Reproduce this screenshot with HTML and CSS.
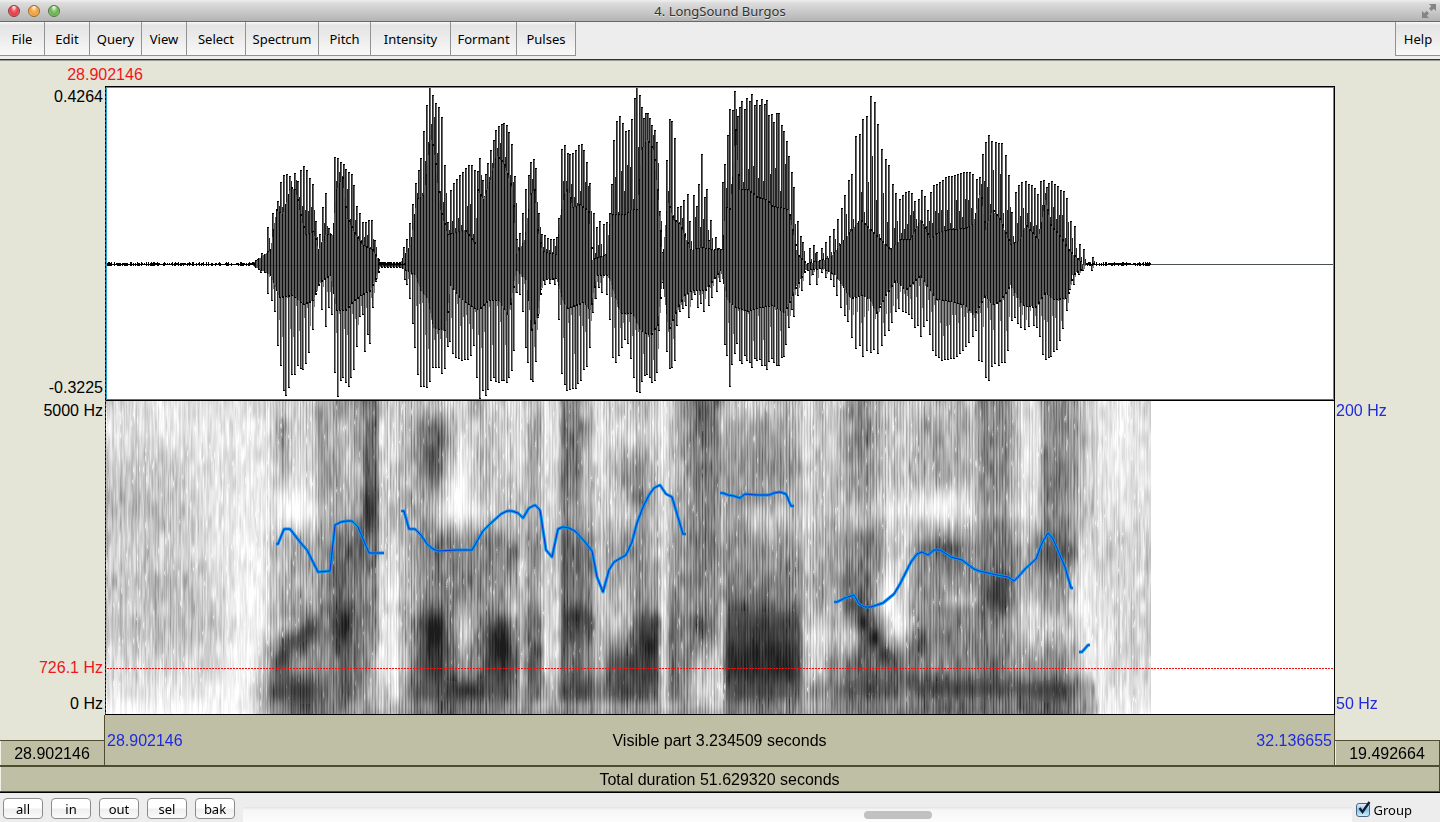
FILE: index.html
```html
<!DOCTYPE html>
<html lang="en">
<head>
    <meta charset="UTF-8">
    <meta name="viewport" content="width=device-width, initial-scale=1.0">
    <title>4. LongSound Burgos</title>
    <link rel="stylesheet" href="styles.css">
</head>
<body>

    <header class="titlebar">
        <div class="lights">
            <button class="light red" aria-label="Close"></button>
            <button class="light amber" aria-label="Minimize"></button>
            <button class="light green" aria-label="Zoom"></button>
        </div>
        <h1>4. LongSound Burgos</h1>
        <button class="fullscreen" aria-label="Full screen">
            <svg width="14" height="14" viewBox="0 0 14 14">
                <path d="M7 0H14V7L11.7 4.7L9.4 7L7 4.6L9.3 2.3Z M0 7L2.3 9.3L4.6 7L7 9.4L4.7 11.7L7 14H0Z" fill="#858585"/>
            </svg>
        </button>
    </header>

    <nav class="menubar">
        <button>File</button>
        <button>Edit</button>
        <button>Query</button>
        <button>View</button>
        <button>Select</button>
        <button>Spectrum</button>
        <button>Pitch</button>
        <button>Intensity</button>
        <button>Formant</button>
        <button>Pulses</button>
        <button class="help">Help</button>
    </nav>

    <main class="editor">
        <div class="cursor-time">28.902146</div>

        <div class="axis left">
            <div class="sound-axis">
                <span>0.4264</span>
                <span>-0.3225</span>
            </div>
            <div class="spectrum-axis">
                <span>5000 Hz</span>
                <div class="low">
                    <span class="red-text">726.1 Hz</span>
                    <span>0 Hz</span>
                </div>
            </div>
        </div>

        <canvas class="plot" id="plot" width="1230" height="629" role="img" aria-label="Waveform, spectrogram and pitch"></canvas>

        <div class="axis right">
            <div class="sound-axis"></div>
            <div class="spectrum-axis">
                <span>200 Hz</span>
                <span>50 Hz</span>
            </div>
        </div>

        <button class="bar before">28.902146</button>
        <button class="bar visible">
            <span class="blue-text">28.902146</span>
            <span>Visible part 3.234509 seconds</span>
            <span class="blue-text">32.136655</span>
        </button>
        <button class="bar after">19.492664</button>
        <button class="bar total">Total duration 51.629320 seconds</button>
    </main>

    <footer class="controls">
        <button>all</button>
        <button>in</button>
        <button>out</button>
        <button>sel</button>
        <button>bak</button>
        <input class="scroll" type="range" min="0" max="1000" value="597" aria-label="Scroll">
        <label class="group" for="group">
            <span class="check">
                <input type="checkbox" id="group" checked>
                <svg width="16" height="17" viewBox="0 0 16 17">
                    <path d="M3.5 8L6.5 12L13.5 2" fill="none" stroke="#10202c" stroke-width="2.4"/>
                </svg>
            </span>
            Group
        </label>
    </footer>

    <script src="plot.js"></script>
</body>
</html>
```
FILE: styles.css
```css
* {
    box-sizing: border-box;
}
body {
    margin: 0;
    min-height: 100vh;
    display: flex;
    flex-direction: column;
    background-color: #ededed;
    font-family: "Noto Sans", "Open Sans", sans-serif;
    font-size: 13px;
    color: #000;
}
button {
    margin: 0;
    padding: 0;
    border: none;
    font: inherit;
    color: inherit;
}

/* title bar */
.titlebar {
    height: 22px;
    display: grid;
    grid-template-columns: 80px 1fr 80px;
    align-items: center;
    background: linear-gradient(#efefef, #dcdcdc 15%, #b4b4b4);
    border-bottom: 1px solid #686868;
}
.titlebar h1 {
    margin: 0;
    font-size: 13px;
    font-weight: normal;
    line-height: 20px;
    text-align: center;
    color: #333;
    text-shadow: 0 1px 0 #e4e4e4;
}
.lights {
    display: flex;
    gap: 8px;
    padding-left: 8px;
}
.light {
    width: 12px;
    height: 12px;
    border-radius: 50%;
    border: 1px solid;
}
.light.red {
    background: radial-gradient(ellipse at 50% 10%, #fff 0, #f0636a 35%, #e23c46 60%, #ffa0a0);
    border-color: #8f3a3c;
}
.light.amber {
    background: radial-gradient(ellipse at 50% 10%, #fff 0, #f6b458 35%, #eda03c 60%, #ffe79a);
    border-color: #97672c;
}
.light.green {
    background: radial-gradient(ellipse at 50% 10%, #fff 0, #8acb72 35%, #68ae54 60%, #cdf5a8);
    border-color: #4c763e;
}
.fullscreen {
    justify-self: end;
    height: 14px;
    margin-right: 4px;
    background: none;
}
.fullscreen svg {
    display: block;
}

/* menus */
.menubar {
    height: 38px;
    display: grid;
    grid-template-columns: 45px 45px 52px 45px 59px 73px 52px 80px 66px 59px 1fr 45px;
    align-items: start;
    border-bottom: 1px solid #333;
}
.menubar button {
    height: 34px;
    background: linear-gradient(#fafafa, #e3e3e3 10%, #f8f8f8);
    border-right: 1px solid #929292;
    border-bottom: 1px solid #929292;
}
.menubar .help {
    grid-column: 12;
    border-right: none;
    border-left: 1px solid #929292;
}

/* editor */
.editor {
    flex: 1;
    display: grid;
    grid-template-columns: 105px 1fr 105px;
    grid-template-rows: 25px minmax(0, 1fr) 25px 26px 26px;
    background-color: #e4e5d7;
    border-top: 1px solid #9b9b92;
    font-family: "Liberation Sans", Arial, sans-serif;
    font-size: 16px;
    line-height: 20px;
}
.cursor-time {
    grid-column: 1 / 4;
    width: 210px;
    padding-top: 4px;
    text-align: center;
    color: #ee1520;
}
.red-text {
    color: #ee1520;
}
.blue-text {
    color: #1f2bdc;
}
.axis {
    display: grid;
    grid-template-rows: 1fr 1fr;
}
.left {
    text-align: right;
    padding-right: 2px;
}
.right {
    padding-left: 1px;
    color: #1f2bdc;
}
.sound-axis,
.spectrum-axis {
    display: flex;
    flex-direction: column;
    justify-content: space-between;
}
.sound-axis {
    padding: 1px 0 3px;
}
.spectrum-axis {
    padding-bottom: 1px;
}
.low {
    display: flex;
    flex-direction: column;
    gap: 16px;
}
.plot {
    display: block;
    width: 100%;
    height: 100%;
    min-height: 0;
}
.bar {
    padding-top: 2px;
    background-color: #bfbfa5;
    border: 0 solid #4f4c30;
}
.before {
    grid-column: 1;
    grid-row: 4;
    border-width: 1px 1px 1px 0;
    box-shadow: inset 1px 0 0 #f0f0e4;
}
.visible {
    grid-column: 2;
    grid-row: 3 / 5;
    display: flex;
    justify-content: space-between;
    align-items: center;
    padding: 2px 2px 0;
    border-width: 0 1px 1px 0;
    box-shadow: -1px 0 0 #4f4c30;
}
.after {
    grid-column: 3;
    grid-row: 4;
    border-width: 1px 1px 1px 0;
    box-shadow: inset 1px 0 0 #f0f0e4;
}
.total {
    grid-column: 1 / 4;
    grid-row: 5;
    border-width: 1px 1px 1px 0;
    box-shadow: inset 1px 0 0 #f0f0e4;
}

/* bottom controls */
.controls {
    height: 30px;
    display: flex;
    align-items: flex-start;
    gap: 8px;
    padding: 5px 30px 0 3px;
    border-top: 1px solid #000;
}
.controls button {
    flex: none;
    width: 40px;
    height: 21px;
    line-height: 18px;
    border: 1px solid #8c8c8c;
    border-radius: 4px;
    background: linear-gradient(#fff, #fff 45%, #efefef 55%, #fafafa);
}
.scroll {
    flex: 1;
    min-width: 0;
    align-self: flex-end;
    height: 15px;
    margin: 0;
    appearance: none;
    background: linear-gradient(#e4e4e4, #f6f6f6 20%, #fcfcfc);
}
.scroll::-webkit-slider-thumb {
    appearance: none;
    width: 68px;
    height: 8px;
    border-radius: 4px;
    background-color: #c1c1c1;
}
.group {
    display: flex;
    align-items: center;
    gap: 4px;
    height: 24px;
    margin: 0 -2px 0 -4px;
}
.check {
    position: relative;
    width: 14px;
    height: 14px;
}
.check input {
    display: block;
    width: 14px;
    height: 14px;
    margin: 0;
    appearance: none;
    border: 1px solid #4d6481;
    border-radius: 3px;
    background: linear-gradient(#e4eefa, #8fc0ee 50%, #c8f0ff);
}
.check svg {
    position: absolute;
    left: 0;
    top: -3px;
    display: none;
    pointer-events: none;
}
.check input:checked + svg {
    display: block;
}
```
FILE: plot.js
```javascript
const canvas = document.getElementById("plot");
const ctx = canvas.getContext("2d");

// all points are in window coordinates, the plot starts at 105, 86
ctx.translate(-105, -86);

const LEFT = 105, TOP = 86, RIGHT = 1334, MIDDLE = 400, BOTTOM = 714, ZERO = 265;

// peaks above the zero line: x, y
const upper = [
    253,262, 258,259, 262,253, 268,227, 273,213, 278,201, 281,182, 284,175, 287,174, 290,176, 295,173, 298,181, 301,170,
    304,166, 307,170, 310,178, 313,184, 316,221, 320,234, 323,207, 326,193, 329,228, 332,238, 335,157, 338,158,
    341,162, 344,164, 346,169, 349,172, 352,174, 354,185, 357,206, 360,213, 363,222, 366,222, 369,220, 372,220,
    375,240, 378,258, 404,247, 407,239, 410,223, 413,204, 416,183, 419,170, 421,158, 424,131, 427,105, 430,87,
    433,95, 436,103, 439,107, 442,117, 445,165, 448,222, 451,190, 454,183, 457,179, 460,175, 463,172, 466,168,
    469,165, 472,165, 475,170, 478,171, 480,158, 483,180, 486,174, 488,163, 491,150, 494,140, 496,130, 499,126,
    502,124, 504,123, 507,125, 509,132, 512,144, 515,176, 517,239, 520,233, 523,213, 526,189, 529,175, 531,162,
    534,159, 536,168, 539,213, 542,234, 545,235, 548,238, 551,239, 554,239, 557,237, 559,218, 562,149, 565,145,
    568,153, 570,154, 573,153, 576,150, 579,145, 582,144, 584,150, 587,162, 590,183, 594,213, 597,227, 600,221,
    604,224, 607,222, 610,213, 612,184, 614,140, 617,121, 620,116, 623,123, 626,131, 629,130, 632,119, 635,98,
    637,87, 640,95, 642,107, 644,118, 646,113, 648,113, 650,118, 652,125, 655,130, 657,142, 660,211, 662,252,
    665,238, 667,160, 670,119, 672,121, 675,138, 678,207, 681,206, 684,200, 688,194, 690,221, 694,195, 697,206, 699,184,
    702,154, 705,197, 707,189, 709,240, 711,220, 716,237, 719,248, 723,182, 725,164, 728,135, 730,109, 733,110,
    735,91, 738,116, 740,107, 742,101, 745,109, 747,98, 750,101, 752,94, 755,105, 757,100, 760,105, 762,99,
    765,104, 767,100, 769,115, 772,114, 774,122, 777,113, 779,113, 782,125, 784,131, 787,141, 789,156, 792,172,
    794,187, 798,221, 801,236, 803,242, 810,248, 814,245, 817,252, 822,248, 826,242, 830,236, 834,229, 838,219,
    842,208, 845,195, 849,180, 852,174, 856,136, 860,134, 863,119, 867,116, 871,96, 875,102, 878,124, 882,149,
    886,159, 889,165, 893,184, 896,193, 900,199, 903,195, 906,192, 909,191, 912,193, 915,201, 919,199, 922,190,
    925,196, 928,210, 931,192, 934,185, 937,184, 940,182, 943,180, 946,177, 949,176, 952,176, 955,175, 958,174,
    961,173, 964,172, 967,172, 970,172, 973,174, 977,179, 980,177, 983,154, 986,142, 989,135, 992,141, 996,142,
    999,143, 1002,143, 1006,155, 1009,175, 1012,212, 1016,192, 1019,185, 1022,182, 1026,181, 1029,184, 1032,185,
    1035,188, 1038,194, 1041,181, 1044,180, 1047,187, 1049,183, 1052,181, 1055,184, 1058,186, 1061,190, 1064,191,
    1067,198, 1071,221, 1075,226, 1080,244, 1084,249, 1089,262, 1093,257
];

// peaks below the zero line
const lower = [
    261,273, 268,294, 272,301, 275,312, 278,346, 281,366, 284,391, 286,396, 289,388, 292,375, 295,375, 298,366,
    301,369, 303,370, 306,364, 309,353, 313,330, 316,292, 319,285, 322,310, 326,327, 329,308, 332,315, 335,373,
    338,397, 341,381, 343,378, 346,383, 349,387, 351,378, 354,370, 357,347, 360,317, 363,315, 365,352, 368,335,
    370,344, 373,308, 376,282, 400,268, 405,280, 407,285, 410,299, 413,324, 415,348, 418,375, 421,387, 424,387,
    427,388, 430,382, 433,368, 436,368, 439,368, 442,374, 445,369, 448,347, 450,342, 453,354, 456,358, 459,359,
    462,361, 465,360, 468,360, 471,356, 474,346, 477,378, 480,399, 483,391, 486,396, 488,390, 491,381, 494,378,
    496,382, 499,383, 502,381, 504,381, 507,383, 509,378, 512,371, 514,351, 517,293, 520,295, 523,312, 526,348,
    528,363, 531,380, 533,382, 536,362, 538,318, 541,290, 545,285, 550,284, 555,285, 559,320, 562,374, 565,385,
    567,391, 570,390, 573,389, 576,389, 578,384, 581,381, 584,370, 587,367, 590,348, 593,313, 596,299, 599,288,
    602,293, 607,295, 610,320, 613,358, 616,363, 619,356, 622,348, 625,340, 628,344, 631,359, 634,378, 637,392,
    640,393, 642,382, 645,376, 647,375, 650,378, 652,383, 655,381, 657,373, 659,331, 662,283, 665,289, 667,352,
    670,369, 672,368, 675,361, 677,326, 680,312, 683,309, 686,306, 689,318, 692,300, 695,295, 698,308, 701,304,
    704,312, 709,306, 712,298, 717,292, 720,282, 725,345, 727,356, 730,387, 732,365, 735,354, 737,344, 740,361,
    742,364, 745,356, 747,361, 750,363, 752,368, 755,359, 757,361, 760,360, 762,366, 765,366, 767,370, 769,362,
    772,359, 774,363, 777,366, 779,366, 782,358, 784,357, 786,345, 789,328, 792,310, 794,317, 798,296, 802,291,
    810,285, 813,275, 817,285, 822,273, 826,278, 831,280, 834,287, 837,296, 841,308, 845,316, 848,322, 852,338,
    856,349, 860,346, 863,357, 867,351, 871,353, 874,350, 878,354, 882,346, 885,336, 889,331, 892,323, 896,312,
    899,309, 903,312, 906,313, 909,315, 912,319, 915,328, 918,326, 921,337, 924,327, 927,321, 930,335, 933,351,
    936,356, 939,358, 942,361, 945,360, 948,360, 951,359, 954,359, 957,357, 960,354, 963,351, 966,347, 969,343,
    973,337, 976,331, 979,361, 982,362, 986,378, 989,381, 992,367, 995,364, 999,366, 1002,363, 1005,363, 1008,351,
    1012,321, 1015,318, 1018,324, 1021,328, 1025,330, 1029,327, 1034,326, 1037,328, 1040,337, 1043,355, 1046,360,
    1049,358, 1051,357, 1054,352, 1057,350, 1060,341, 1063,329, 1067,311, 1070,290, 1074,285, 1079,275, 1083,271,
    1092,271
];

// outline of the dense part of the wave
const bodyTop = [
    253,263, 270,250, 276,210, 282,215, 290,188, 295,190, 300,215, 305,235, 313,232, 318,250, 325,235, 332,235,
    336,190, 342,178, 346,217, 355,235, 362,245, 372,250, 380,263, 400,263, 410,245, 416,200, 424,195, 430,135,
    434,155, 440,210, 447,235, 455,233, 464,230, 470,237, 475,245, 477,190, 483,200, 490,180, 496,155, 504,165,
    512,190, 516,255, 524,240, 530,195, 534,190, 537,230, 542,252, 556,255, 560,215, 564,195, 568,188, 572,208,
    580,205, 588,212, 592,260, 606,255, 610,215, 625,215, 631,210, 637,210, 641,150, 647,140, 653,150, 658,200,
    662,262, 667,200, 673,220, 680,225, 690,250, 702,248, 712,250, 722,250, 725,207, 730,210, 735,130, 739,190,
    748,190, 757,198, 766,200, 772,207, 780,208, 788,210, 793,235, 797,255, 806,264, 830,258, 840,245, 850,232,
    860,220, 870,230, 880,240, 890,250, 900,240, 910,240, 920,220, 930,240, 935,235, 940,232, 950,230, 965,229,
    973,224, 980,190, 985,230, 992,210, 1000,220, 1010,245, 1020,240, 1025,225, 1038,240, 1045,200, 1050,225,
    1060,237, 1068,250, 1080,262
];
const bodyBottom = [
    253,266, 270,275, 279,297, 292,295, 303,304, 313,300, 319,282, 330,275, 336,310, 345,310, 352,302, 360,295,
    370,290, 380,267, 400,267, 415,275, 420,290, 427,298, 433,328, 445,330, 450,285, 460,298, 470,305, 478,310,
    488,300, 498,300, 508,315, 516,270, 526,280, 531,330, 537,315, 542,280, 556,278, 562,300, 567,308, 583,302,
    590,310, 596,275, 608,275, 620,313, 632,313, 640,330, 650,335, 657,325, 662,280, 668,330, 676,310, 684,295,
    692,290, 705,290, 720,270, 727,300, 735,307, 748,311, 760,307, 772,305, 784,313, 794,290, 805,270, 822,268,
    835,275, 850,298, 862,295, 870,300, 876,313, 885,295, 895,280, 905,290, 920,275, 930,290, 936,299, 950,301,
    965,305, 973,315, 985,295, 992,305, 1000,300, 1010,285, 1022,305, 1035,307, 1045,292, 1052,299, 1067,298,
    1072,275, 1083,268
];

// spectrogram darkness (percent) for each x at the heights in specY
const specY = [401, 430, 470, 510, 550, 590, 630, 665, 690, 713];
const spec = [
    [106, 25,12,22,25,22,25,22,18,12,3], [130, 18,14,25,30,22,28,25,20,12,3], [160, 10,12,25,30,25,30,28,20,12,3],
    [190, 10,12,15,18,18,25,25,15,10,2], [215, 10,10,12,15,10,18,22,15,8,2], [230, 12,10,10,8,8,8,10,5,3,1],
    [250, 12,8,8,6,5,5,4,3,8,8], [262, 14,10,10,8,8,5,10,20,30,30], [272, 15,15,15,12,25,20,30,50,65,45],
    [282, 22,40,30,10,28,30,50,65,75,55], [295, 20,15,12,8,40,35,55,50,80,65], [310, 20,15,15,12,38,32,60,50,80,65],
    [322, 35,45,45,35,45,45,50,48,65,60], [332, 45,35,42,40,48,60,65,55,55,50], [345, 38,25,25,35,65,65,80,65,72,50],
    [358, 40,40,30,38,65,50,55,60,60,45], [367, 60,60,70,90,60,50,55,45,40,45], [375, 65,60,65,75,60,48,45,30,30,40],
    [381, 25,15,20,25,20,15,15,10,20,35], [395, 20,15,20,30,15,8,8,3,12,30], [404, 25,28,30,35,30,30,35,30,40,45],
    [415, 25,40,40,35,42,40,55,60,70,60], [430, 28,60,60,40,58,55,85,85,72,62], [440, 25,60,55,20,58,55,85,85,75,65],
    [450, 15,30,25,8,50,50,55,55,75,70], [465, 15,15,12,12,52,50,40,45,75,60], [477, 40,25,25,22,50,48,55,60,75,60],
    [490, 15,28,25,22,52,45,75,75,70,55], [503, 18,20,20,22,52,45,85,85,75,50], [515, 12,15,20,25,50,35,45,60,60,45],
    [521, 20,12,15,30,25,20,30,30,35,40], [530, 25,35,40,35,52,45,65,75,70,50], [538, 25,42,30,30,50,40,65,68,65,50],
    [545, 12,10,15,15,20,15,15,15,35,45], [557, 15,12,15,20,25,20,15,15,35,45], [563, 50,60,60,50,65,60,75,68,75,55],
    [575, 45,62,60,40,60,60,75,70,75,55], [588, 30,35,30,28,55,50,68,55,75,50], [598, 15,15,15,20,25,20,30,30,50,40],
    [612, 30,15,22,20,40,40,45,70,75,50], [625, 20,18,42,25,45,35,50,75,78,50], [640, 30,20,48,40,48,45,78,80,75,50],
    [655, 20,15,25,20,30,40,80,82,70,45], [663, 10,8,12,15,15,15,15,15,20,30], [672, 25,25,25,30,40,45,60,65,60,45],
    [685, 45,45,40,40,42,45,50,50,50,48], [700, 70,62,55,52,55,50,58,35,30,45], [715, 68,60,55,55,55,50,55,30,20,35],
    [721, 40,25,35,35,35,30,28,20,18,30], [728, 28,35,45,45,50,60,80,90,75,60], [760, 22,40,45,32,42,55,82,92,78,55],
    [790, 28,38,45,32,45,55,82,90,75,55], [798, 30,35,40,35,45,55,75,80,70,50], [805, 12,10,12,15,20,25,20,25,35,40],
    [820, 25,25,22,25,35,40,15,20,45,40], [835, 20,22,25,30,40,40,30,45,60,48], [850, 45,45,45,30,50,60,45,60,75,60],
    [865, 50,55,45,30,55,62,65,70,75,60], [875, 35,40,40,28,55,50,65,65,75,60], [890, 22,25,25,12,28,20,35,65,72,60],
    [905, 20,25,25,15,20,18,30,60,68,60], [920, 25,35,35,12,45,45,52,55,75,65], [945, 30,32,38,12,58,45,55,52,80,68],
    [970, 25,30,30,15,50,42,52,50,80,68], [981, 55,50,50,45,55,60,60,60,80,65], [1000, 50,52,50,45,58,80,50,60,78,62],
    [1012, 42,42,38,30,52,60,40,45,72,60], [1022, 15,15,15,15,38,35,30,42,75,65], [1037, 15,12,15,18,50,35,30,45,80,68],
    [1045, 50,45,50,50,60,50,35,50,82,68], [1060, 50,52,58,55,60,45,35,50,80,65], [1072, 40,42,45,45,50,25,25,35,70,55],
    [1082, 25,30,25,30,15,8,8,12,45,50], [1092, 20,20,20,22,20,10,8,8,35,40], [1100, 10,8,10,15,22,15,8,8,10,8],
    [1120, 10,5,8,12,18,18,20,15,15,8], [1151, 18,15,8,15,20,18,18,20,12,5]
];

// formants and gaps that fall between those heights: x, y, x radius, y radius, darkness
const spots = [
    [282,655,9,14,22], [295,640,10,12,22], [310,628,10,12,18], [285,625,14,10,-22], [343,620,12,16,14],
    [285,455,6,16,14], [300,510,20,26,-8], [430,452,14,20,12], [456,490,14,30,-14], [433,630,13,18,14],
    [465,630,12,22,-18], [470,690,20,8,10], [502,648,12,16,16], [505,610,16,10,-16], [575,615,13,10,14],
    [580,650,12,10,-12], [650,645,9,12,16], [620,620,14,20,-22], [640,500,16,12,12], [700,680,16,22,-10],
    [760,498,30,8,10], [760,520,34,14,-10], [703,625,8,10,14], [852,605,8,10,20], [862,622,8,10,26],
    [874,638,8,10,28], [886,654,9,10,24], [885,600,10,22,-26], [897,625,9,18,-26], [850,640,10,16,-22],
    [920,645,9,12,18], [945,500,28,16,-8], [940,548,26,8,14], [960,600,20,8,-16], [995,603,14,14,12],
    [1040,620,22,22,-14], [1055,555,16,16,12], [950,700,110,8,-10], [605,705,190,6,-8]
];

// pitch contour, one list for each voiced stretch
const pitch = [
    [276,544, 278,544, 284,529, 290,529, 300,542, 307,550, 312,560, 318,572, 330,571, 335,525, 341,522, 347,521,
        352,521, 358,527, 369,553, 384,553],
    [401,511, 404,511, 409,529, 415,529, 421,535, 427,544, 433,549, 438,551, 457,550, 472,550, 483,531, 490,524,
        501,514, 507,511, 512,511, 518,513, 523,518, 529,508, 535,505, 540,510, 546,550, 552,557, 558,529, 563,527,
        569,528, 575,531, 585,542, 592,551, 597,577, 603,592, 609,570, 614,562, 626,555, 632,542, 637,523, 643,507,
        649,495, 654,488, 660,485, 666,494, 672,497, 683,534, 686,534],
    [720,493, 723,493, 728,495, 734,496, 740,498, 745,494, 757,495, 769,495, 774,493, 780,492, 786,494, 791,506, 794,506],
    [834,602, 837,602, 845,598, 854,595, 859,604, 865,607, 871,607, 883,603, 894,594, 900,584, 911,562, 917,554,
        922,552, 928,555, 934,550, 940,550, 951,557, 962,560, 974,569, 979,571, 997,575, 1008,577, 1014,581,
        1019,576, 1025,569, 1036,559, 1042,543, 1048,533, 1053,539, 1065,567, 1071,588, 1073,588],
    [1079,652, 1082,652, 1088,645, 1090,645]
];

// repeatable random numbers
let seed = 7;
function random() {
    seed = (seed * 1664525 + 1013904223) % 4294967296;
    return seed / 4294967296;
}

function valueAt(points, x) {
    for (let i = 2; i < points.length; i += 2) {
        if (x <= points[i]) {
            const t = (x - points[i - 2]) / (points[i] - points[i - 2]);
            return points[i - 1] + (points[i + 1] - points[i - 1]) * t;
        }
    }
    return points[points.length - 1];
}

function rect(color, x, y, w, h) {
    ctx.fillStyle = color;
    ctx.fillRect(x, y, w, h);
}

function drawSpikes(points, down) {
    for (let i = 0; i < points.length; i += 2) {
        const x = points[i], y = points[i + 1];
        const from = Math.min(y, ZERO), size = Math.abs(y - ZERO);
        rect(down ? "#303030" : "#262626", x - 1, from, 1, size);
        rect(down ? "#8c8c8c" : "#686868", x, from, 1, size);
        rect("#000", x - 1, down ? y - 1 : y, 2, 1);

        // shorter echo right after each pulse
        const inner = valueAt(down ? bodyBottom : bodyTop, x);
        const echo = Math.round(inner + (y - inner) * random() * 0.6);
        rect(down ? "#7c7c7c" : "#262626", x + 1, Math.min(echo, ZERO), 1, Math.abs(echo - ZERO));
    }
}

function drawWave() {
    rect("#fff", LEFT, TOP, RIGHT - LEFT + 1, MIDDLE - TOP);
    rect("#4a4f52", LEFT, ZERO - 1, RIGHT - LEFT, 1);
    drawSpikes(upper, false);
    drawSpikes(lower, true);

    for (let x = 253; x < 1082; x++) {
        const top = Math.round(valueAt(bodyTop, x));
        const bottom = Math.round(valueAt(bodyBottom, x));
        rect(x % 3 === 0 ? "#0c0c0c" : "#5c5c5c", x, top, 1, bottom - top);
        if (x % 3 === 0) {
            rect("#000", x, top - 1, 2, 2);
            rect("#000", x, bottom - 1, 2, 2);
        }
    }

    // background hiss before, between and after the words
    for (const [from, to] of [[LEFT, 255], [378, 406], [1086, 1151]]) {
        for (let x = from; x < to; x++) {
            const size = 1 + Math.floor(random() * 4);
            rect("#000", x, ZERO - 1 - Math.floor(size / 2), 1, size);
        }
    }
    ctx.globalAlpha = 0.6;
    for (let x = 256; x < 1086; x += 3) {
        rect("#16425c", x, ZERO, 2, 1);
    }
    ctx.globalAlpha = 1;
}

function darkness(x, y) {
    let i = 1;
    while (i < spec.length - 1 && spec[i][0] < x) i++;
    let j = 1;
    while (j < specY.length - 1 && specY[j] < y) j++;
    const a = spec[i - 1], b = spec[i];
    let tx = (x - a[0]) / (b[0] - a[0]);
    let ty = (y - specY[j - 1]) / (specY[j] - specY[j - 1]);
    tx = tx * tx * (3 - 2 * tx);
    ty = ty * ty * (3 - 2 * ty);
    const high = a[j] + (b[j] - a[j]) * tx;
    const low = a[j + 1] + (b[j + 1] - a[j + 1]) * tx;
    let sum = high + (low - high) * ty;
    for (const [sx, sy, rx, ry, amount] of spots) {
        const dx = (x - sx) / rx, dy = (y - sy) / ry;
        const distance = dx * dx + dy * dy;
        if (distance < 6) {
            sum += amount * Math.exp(-distance);
        }
    }
    return Math.max(0, sum);
}

function drawSpectrogram() {
    rect("#fff", LEFT, MIDDLE, RIGHT - LEFT + 1, BOTTOM - MIDDLE);
    const width = 1151 - 106, height = BOTTOM - 401;
    const image = ctx.createImageData(width, height);
    const step = 14;
    let previous = null;

    for (let i = 0; i < width; i++) {
        const x = 106 + i;
        const voiced = x > 265 && x < 1085;
        const stripe = (random() - 0.5) * 13 + (voiced ? (x % 3 === 0 ? 8 : -4) : 0);
        const shift = random() * 6;

        // streaks are drawn out vertically and shared with the next column
        const knots = [];
        for (let k = 0; k < height / step + 3; k++) {
            const own = (random() - 0.5) * 26;
            knots.push(previous ? own * 0.7 + previous[k] * 0.55 : own);
        }
        previous = knots;

        for (let j = 0; j < height; j++) {
            const pos = (j + shift) / step;
            const k = Math.floor(pos);
            let t = pos - k;
            t = t * t * (3 - 2 * t);
            const streak = knots[k] + (knots[k + 1] - knots[k]) * t;
            const base = darkness(x, 401 + j);
            const d = base + (streak + stripe) * (0.5 + 0.5 * Math.min(1, base / 25)) * (base > 70 ? 0.6 : 1);
            const gray = Math.max(28, 255 - Math.max(0, d) * 2.35);
            const p = (j * width + i) * 4;
            image.data[p] = image.data[p + 1] = image.data[p + 2] = gray;
            image.data[p + 3] = 255;
        }
    }
    ctx.putImageData(image, 106 - LEFT, 401 - TOP);

    // small bright specks
    for (let n = 0; n < 900; n++) {
        const x = 107 + Math.floor(random() * (width - 2));
        const y = 403 + Math.floor(random() * (height - 14));
        const size = 2 + Math.floor(random() * 4);
        const strength = 0.75 - darkness(x, y) / 120;
        if (strength > 0) {
            rect("rgba(255, 255, 255, " + strength + ")", x, y, 1, size);
            rect("rgba(255, 255, 255, " + strength / 3 + ")", x, y - 2, 2, size + 4);
        }
    }
}

function drawPitch() {
    ctx.lineJoin = "round";
    for (const [color, width] of [["#0a96ea", 3], ["#0636d4", 1]]) {
        ctx.strokeStyle = color;
        ctx.lineWidth = width;
        for (const part of pitch) {
            ctx.beginPath();
            for (let i = 0; i < part.length; i += 2) {
                ctx.lineTo(part[i], part[i + 1]);
            }
            ctx.stroke();
        }
    }
}

function drawFrame() {
    // frequency cursor
    for (let x = LEFT + 2; x < RIGHT; x += 3) {
        rect("#f01010", x, 668, 2, 1);
    }

    rect("#2c9fce", LEFT + 1, TOP + 1, RIGHT - LEFT - 1, 1);
    rect("#2c7fa6", LEFT + 1, MIDDLE - 1, RIGHT - LEFT - 1, 1);
    rect("#2c9fce", LEFT + 1, TOP + 1, 1, MIDDLE - TOP - 1);
    rect("#2c9fce", RIGHT - 1, TOP + 1, 1, MIDDLE - TOP - 1);
    rect("#000", LEFT, TOP, RIGHT - LEFT + 1, 1);
    rect("#000", LEFT, MIDDLE, RIGHT - LEFT + 1, 1);
    rect("#000", LEFT, BOTTOM, RIGHT - LEFT + 1, 1);
    rect("#000", RIGHT, TOP, 1, BOTTOM - TOP);
    rect("#000", LEFT, TOP, 1, BOTTOM - TOP);
    for (let y = TOP + 2; y < BOTTOM; y += 4) {
        rect("#c81e1e", LEFT, y, 1, 2);
    }
}

drawWave();
drawSpectrogram();
drawPitch();
drawFrame();
```
